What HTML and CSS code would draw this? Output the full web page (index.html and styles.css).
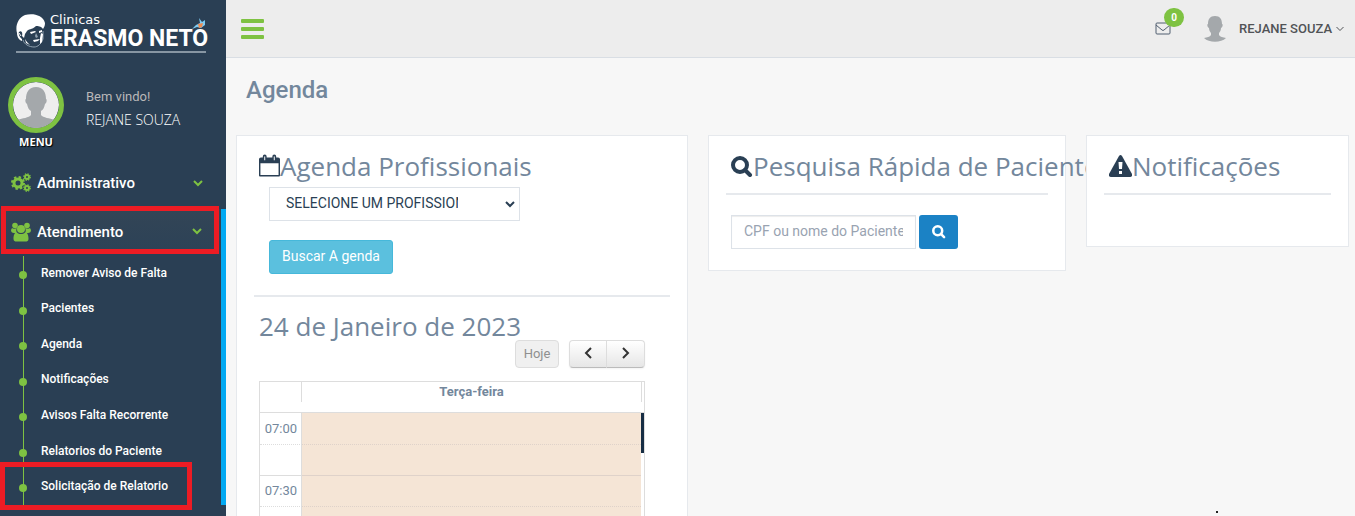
FILE: index.html
```html
<!DOCTYPE html>
<html lang="pt-BR">
<head>
<meta charset="utf-8">
<title>Agenda</title>
<link rel="stylesheet" href="styles.css">
</head>
<body>
<div class="layout">
  <aside class="sidebar">
    <a class="brand" href="#">
      <svg class="brand-head" width="30" height="35" viewBox="0 0 30 35" aria-hidden="true">
        <path fill="#fff" d="M1 19C-1 12 2 4 9 1C17-1 27 1 29 9C29 12 28 13 27 15C25 12 22 12 20 12C16 16 12 15 11 17L9 20L8 24L6 22C7 18 5 16 3 18C2 20 4 24 6 25L6 27C3 26 1 23 1 19Z"/>
        <path fill="none" stroke="#8fa0ae" stroke-width="1" d="M7 26C8 30 13 33 18 33C22 33 25 30 27 25L27 17"/>
        <path fill="none" stroke="#fff" stroke-width="1" d="M3 19L5 22"/>
        <path fill="#fff" d="M14 18L19 17L20 18L15 20ZM23 17L26 16L26 18L23 19ZM17 26L24 25L22 27L18 28ZM25 19L27 20L26 28L24 30L24 24ZM9 25L11 28L14 31L10 29Z"/>
        <path fill="#8fa0ae" d="M20 19L22 23L20 24L19 22Z"/>
      </svg>
      <span class="brand-text"><span class="brand-small">Clinicas</span><span class="brand-name">ERASMO NETO</span></span>
      <svg class="brand-bird" width="14" height="13" viewBox="0 0 14 13" aria-hidden="true">
        <path fill="#7ecbf2" d="M7 0L10 4L13 2L13 7L9 10L5 9L0 11L4 7L8 5Z"/><path fill="#f08b50" d="M6 6L11 5L10 9L7 10Z"/>
      </svg>
    </a>
    <div class="profile">
      <div class="profile-pic">
        <svg class="avatar" viewBox="0 0 46 46" aria-hidden="true">
          <circle cx="23" cy="23" r="23" fill="#eee"/>
          <path fill="#a4a8ab" d="M23 5C16 5 13 10 13 17C12 17 12 21 14 22C15 26 16 28 18 29V33C16 36 9 36 5 38A23 23 0 0 0 41 38C37 36 30 36 28 33V29C30 28 31 26 32 22C34 21 34 17 33 17C33 10 30 5 23 5Z"/>
        </svg>
        <span class="menu-caption">MENU</span>
      </div>
      <div class="profile-info"><span class="welcome">Bem vindo!</span><span class="profile-name">REJANE SOUZA</span></div>
    </div>
    <nav class="menu">
      <a class="menu-link" href="#">
        <svg width="20" height="20" viewBox="0 0 20 20" fill="none" stroke="#7ec242" aria-hidden="true">
          <circle cx="7" cy="10" r="4" stroke-width="3"/><circle cx="7" cy="10" r="6" stroke-width="2" stroke-dasharray="2.4 2.3"/>
          <circle cx="16" cy="4" r="2" stroke-width="2"/><circle cx="16" cy="4" r="3.3" stroke-width="1.2" stroke-dasharray="1.3 1.3"/>
          <circle cx="16" cy="15" r="2" stroke-width="2"/><circle cx="16" cy="15" r="3.3" stroke-width="1.2" stroke-dasharray="1.3 1.3"/>
        </svg>
        <span>Administrativo</span>
        <svg class="chevron" width="10" height="7" viewBox="0 0 10 7" aria-hidden="true"><path d="M1 1L5 5L9 1"/></svg>
      </a>
      <div class="menu-open">
        <a class="menu-link menu-current marked" href="#">
          <svg width="20" height="20" viewBox="0 0 20 20" fill="#7ec242" aria-hidden="true">
            <circle cx="4" cy="3.5" r="2.8"/><circle cx="16" cy="3.5" r="2.8"/>
            <path d="M1 6C2 7 4 7 6 6C5 8 5 9 6 11H3C1 11 0 10 0 8ZM19 6C18 7 16 7 14 6C15 8 15 9 14 11H17C19 11 20 10 20 8Z"/>
            <circle cx="10" cy="7" r="4"/><path d="M6 10.500C8 12.500 12 12.500 14 10.500C17 10.500 17.500 14 17.500 17C17.500 19 16 19.500 14.500 19.500H5.500C4 19.500 2.500 19 2.500 17C2.500 14 3 10.500 6 10.500Z"/>
          </svg>
          <span>Atendimento</span>
          <svg class="chevron" width="10" height="7" viewBox="0 0 10 7" aria-hidden="true"><path d="M1 1L5 5L9 1"/></svg>
        </a>
        <ul class="submenu">
          <li><a href="#">Remover Aviso de Falta</a></li>
          <li><a href="#">Pacientes</a></li>
          <li><a href="#">Agenda</a></li>
          <li><a href="#">Notificações</a></li>
          <li><a href="#">Avisos Falta Recorrente</a></li>
          <li><a href="#">Relatorios do Paciente</a></li>
          <li class="marked marked-item"><a href="#">Solicitação de Relatorio</a></li>
        </ul>
      </div>
    </nav>
  </aside>

  <div class="main">
    <header class="topbar">
      <button class="toggle" type="button" aria-label="Menu"><i></i><i></i><i></i></button>
      <div class="top-actions">
        <button class="mail" type="button" aria-label="Mensagens">
          <svg width="16" height="13" viewBox="0 0 16 13" fill="none" stroke="#515f70" aria-hidden="true"><rect x="1" y="1" width="14" height="11" rx="1"/><path d="M1 3L7 8Q8 9 9 8L15 3"/></svg>
          <span class="badge">0</span>
        </button>
        <button class="user" type="button">
          <svg width="22" height="27" viewBox="0 0 22 27" aria-hidden="true"><path fill="#a4a8ab" d="M11 1C6 1 4 4 4 9C3 9 3 12 5 13C5 15 6 17 7 18V20C6 22 3 22 0 23C5 28 17 28 22 23C19 22 16 22 15 20V18C16 17 17 15 17 13C19 12 19 9 18 9C18 4 16 1 11 1Z"/></svg>
          <span>REJANE SOUZA</span>
          <svg class="user-caret" width="8" height="6" viewBox="0 0 8 6" aria-hidden="true"><path fill="none" stroke="#515356" d="M.5 1L4 4.500L7.500 1"/></svg>
        </button>
      </div>
    </header>

    <main class="content">
      <h1>Agenda</h1>
      <div class="panels">
        <section class="panel">
          <h2><svg width="21" height="24" viewBox="0 0 22 24" aria-hidden="true"><path fill="#2a3f54" fill-rule="evenodd" d="M2 3H4V2Q4 0 6 0Q8 0 8 2V3H14V2Q14 0 16 0Q18 0 18 2V3H20Q22 3 22 5V22Q22 23 21 23H1Q0 23 0 22V5Q0 3 2 3ZM1.500 9V21.500H20.500V9Z"/><path stroke="#fff" d="M6 2V6M16 2V6"/></svg>Agenda Profissionais</h2>
          <form class="schedule-form">
            <div class="select-wrap">
              <select aria-label="Profissional"><option>SELECIONE UM PROFISSIONAL</option></select>
              <svg width="10" height="7" viewBox="0 0 10 7" aria-hidden="true"><path fill="none" stroke="#2a3f54" stroke-width="2" d="M1 1L5 5L9 1"/></svg>
            </div>
            <button class="btn-info" type="button">Buscar A genda</button>
          </form>
          <hr>
          <h2 class="date">24 de Janeiro de 2023</h2>
          <div class="calendar">
            <div class="cal-tools">
              <button class="today" type="button" disabled>Hoje</button>
              <div class="cal-nav">
                <button type="button" aria-label="Anterior"><svg width="8" height="12" viewBox="0 0 8 12"><path d="M7 1L2 6L7 11"/></svg></button><button type="button" aria-label="Próximo"><svg width="8" height="12" viewBox="0 0 8 12"><path d="M1 1L6 6L1 11"/></svg></button>
              </div>
            </div>
            <div class="cal-view">
              <div class="cal-head"><span>Terça-feira</span></div>
              <div class="cal-body">
                <table>
                  <tbody>
                    <tr><th scope="row">07:00</th><td></td></tr>
                    <tr class="minor"><th></th><td></td></tr>
                    <tr><th scope="row">07:30</th><td></td></tr>
                    <tr class="minor"><th></th><td></td></tr>
                  </tbody>
                </table>
                <div class="cal-scroll"></div>
              </div>
            </div>
          </div>
        </section>

        <section class="panel panel-search">
          <h2><svg width="22" height="22" viewBox="0 0 22 22" fill="none" stroke="#2a3f54" aria-hidden="true"><circle cx="9" cy="10" r="7" stroke-width="4"/><path stroke-width="4" stroke-linecap="round" d="M14 15L19 20"/></svg>Pesquisa Rápida de Pacientes</h2>
          <hr>
          <form class="search-form">
            <input type="text" placeholder="CPF ou nome do Paciente" aria-label="CPF ou nome do Paciente">
            <button type="button" aria-label="Pesquisar"><svg width="14" height="14" viewBox="0 0 22 22" fill="none" stroke="#fff"><circle cx="9" cy="9" r="7" stroke-width="4"/><path stroke-width="4" stroke-linecap="round" d="M14 14L19 19"/></svg></button>
          </form>
        </section>

        <section class="panel panel-notes">
          <h2><svg width="23" height="22" viewBox="0 0 23 22" aria-hidden="true"><path fill="#2a3f54" d="M10 1Q11.500-1 13 1L23 19Q23.500 22 21 22H2Q-.5 22 0 19Z"/><path fill="#fff" d="M9.500 7H13.500L13 14H10ZM10 16H13V19H10Z"/></svg>Notificações</h2>
          <hr>
        </section>
      </div>
    </main>
  </div>
</div>
</body>
</html>
```

FILE: styles.css
```css
* { box-sizing: border-box; }
body { margin: 0; background: #f7f7f7; color: #73879c; font-family: Roboto, "Open Sans", sans-serif; font-size: 13px; }
a { color: inherit; text-decoration: none; }
button, input, select { font-family: inherit; margin: 0; }
button { padding: 0; border: 0; background: none; }
svg { display: block; flex: none; }
.layout { display: flex; height: 100vh; overflow: hidden; }

/* Sidebar */
.sidebar { flex: none; width: 226px; background: #2a3f54; color: #fff; }
.brand { position: relative; display: flex; gap: 4px; height: 39px; margin: 14px 20px 0 16px; border-bottom: 2px solid #8796a3; }
.brand-text { display: flex; flex-direction: column; white-space: nowrap; }
.brand-small { font: 13px/12px "DejaVu Sans", sans-serif; }
.brand-name { font: 700 23px/26px Roboto, sans-serif; }
.brand-bird { position: absolute; right: 0; top: 4px; }
.profile { display: flex; gap: 22px; padding: 24px 0 0 8px; }
.profile-pic { display: flex; flex-direction: column; align-items: center; }
.avatar { width: 56px; height: 56px; border: 5px solid #7ec242; border-radius: 50%; }
.menu-caption { font: 700 11px/18px "Open Sans", sans-serif; text-shadow: 1px 1px 1px #000; }
.profile-info { display: flex; flex-direction: column; padding-top: 8px; }
.welcome { color: #bab8b8; font-size: 13px; line-height: 23px; }
.profile-name { font: 300 14px/23px "Open Sans", sans-serif; }
.menu { padding-top: 10px; }
.menu-link { display: flex; align-items: center; gap: 6px; height: 44px; margin-bottom: 4px; padding: 0 23px 0 11px; font-size: 15px; font-weight: 500; }
.chevron { margin-left: auto; fill: none; stroke: #7ec242; stroke-width: 2; }
.menu-open { border-right: 5px solid #02a9f2; }
.menu-current { margin: 0; padding-right: 19px; background: linear-gradient(#334556, #2c4257); height: 45px; }
.marked { position: relative; }
.marked::after { content: ""; position: absolute; inset: -3px 2px 0 1px; border: 5px solid #ed1c24; }
.submenu { list-style: none; display: grid; grid-auto-rows: 1fr; min-height: 249px; margin: 2px 0 0; padding: 0; font-size: 12px; font-weight: 500; }
.submenu li { position: relative; display: flex; align-items: center; padding: 0 0 2px 41px; }
.submenu li::before { content: ""; position: absolute; left: 23px; top: 0; bottom: 0; width: 1px; background: #7ec242; }
.submenu a::before { content: ""; position: absolute; left: 19px; top: 15px; width: 8px; height: 8px; border-radius: 50%; background: #7ec242; }
.submenu .marked-item::after { inset: -7px 29px -5px 0; }

/* Top bar */
.main { flex: 1; min-width: 0; }
.topbar { display: flex; align-items: center; justify-content: space-between; height: 58px; padding: 0 11px 0 15px; background: #ededed; border-bottom: 1px solid #d9dee4; }
.toggle { display: grid; gap: 4px; width: 23px; }
.toggle i { height: 4px; border-radius: 1px; background: #7ec242; }
.top-actions { display: flex; align-items: center; gap: 33px; }
.mail { position: relative; }
.badge { position: absolute; left: 9px; top: -14px; width: 20px; height: 19px; border-radius: 10px; background: #7ec242; color: #fff; font-size: 10px; font-weight: 700; line-height: 19px; text-align: center; }
.user { display: flex; align-items: center; gap: 13px; color: #515356; font-size: 13px; font-weight: 500; }
.user-caret { margin-left: -9px; }

/* Panels */
.content { position: relative; padding: 16px 6px 0 10px; }
h1 { margin: 0; padding: 0 10px; font-size: 24px; font-weight: 500; line-height: 32px; }
.panels { display: grid; grid-template-columns: 452fr 358fr 263fr; align-items: start; gap: 20px; margin-top: 29px; }
.panel { min-width: 0; padding: 12px 17px 20px; background: #fff; border: 1px solid #e6e9ed; }
h2 { display: flex; align-items: center; margin: 0; padding-left: 5px; font: 400 26px/36px "Open Sans", sans-serif; white-space: nowrap; }
hr { height: 2px; margin: 9px 0 20px; border: 0; background: #e6e9ed; }
.schedule-form { display: grid; justify-items: start; gap: 19px; padding: 3px 0 12px 15px; }
.select-wrap { position: relative; width: 251px; }
.select-wrap svg { position: absolute; right: 5px; top: 14px; }
select { appearance: none; width: 100%; height: 34px; padding: 0 61px 2px 16px; border: 1px solid #dde2e8; border-radius: 0; background: #fff; color: #2a3f54; font-size: 14px; }
.btn-info { height: 34px; padding: 0 12px 2px; border: 1px solid #46b8da; border-radius: 3px; background: #5bc0de; color: #fff; font-size: 14px; }
.date { margin-top: -9px; }
.calendar { padding: 0 25px 0 5px; }
.cal-tools { display: flex; justify-content: flex-end; gap: 10px; margin-top: -4px; }
.cal-tools button { height: 28px; border: 1px solid #ddd; border-bottom-color: #bbb; background: linear-gradient(#fff, #e6e6e6); }
.cal-tools .today { width: 44px; padding-bottom: 2px; border-color: #ddd; border-radius: 4px; background: #f0f0f0; color: #8f8f8f; font-size: 13px; }
.cal-nav { display: flex; border-radius: 4px; box-shadow: 0 1px 2px #0000000d; }
.cal-nav button { display: grid; place-items: center; width: 38px; padding-bottom: 2px; border-radius: 4px 0 0 4px; }
.cal-nav button + button { width: 39px; margin-left: -1px; border-radius: 0 4px 4px 0; }
.cal-nav path { fill: none; stroke: #333; stroke-width: 2; }
.cal-view { margin-top: 13px; border: 1px solid #ddd; }
.cal-head { height: 31px; padding: 0 2px 0 41px; border-bottom: 1px solid #ddd; }
.cal-head span { display: block; border: solid #ddd; border-width: 0 1px; font-weight: 700; line-height: 20px; text-align: center; }
.cal-body { display: flex; align-items: flex-start; }
table { flex: 1; border-collapse: separate; border-spacing: 0; }
th { width: 42px; height: 31px; padding: 0 4px 1px; border-right: 1px solid #ddd; font-weight: 400; text-align: right; }
td { background: #f5e5d6; }
tr + tr > * { border-top: 1px solid #ddd; }
tr + tr > td { border-top-color: #dfd2ca; }
tr.minor > * { border-top-style: dotted; }
.cal-scroll { width: 3px; height: 40px; background: #172d44; }
.search-form { display: flex; gap: 3px; padding-left: 5px; }
.search-form input { width: 185px; height: 34px; padding: 0 12px 2px; border: 1px solid #dde2e8; border-radius: 0; box-shadow: inset 0 1px 1px #00000013; font-size: 14px; }
.search-form input::placeholder { color: #99a3b1; }
.search-form button { display: grid; place-items: center; width: 39px; height: 34px; border-radius: 3px; background: #1b82c5; }
.panel-search { padding-bottom: 21px; }
.panel-notes { padding-bottom: 31px; }
.main { position: relative; }
.main::after { content: ""; position: absolute; right: 137px; bottom: 3px; width: 2px; height: 2px; background: #222; }
```
